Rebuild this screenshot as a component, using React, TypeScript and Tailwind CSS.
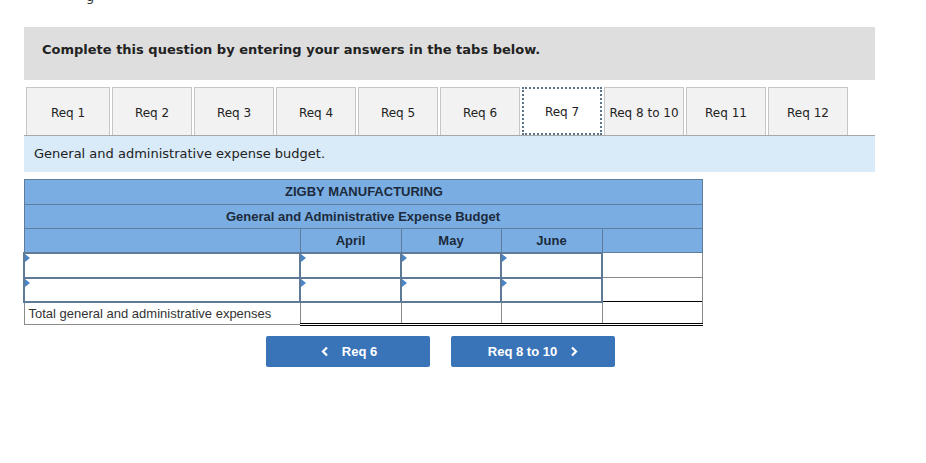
import React from "react";

const verdana = { fontFamily: '"DejaVu Sans", Verdana, sans-serif' };

function Tri() {
  return (
    <span className="absolute left-0 top-0 w-0 h-0 border-t-[4px] border-b-[4px] border-l-[5px] border-t-transparent border-b-transparent border-l-[#4a86c5]" />
  );
}

function InputCell() {
  return (
    <td className="relative border-2 border-[#5e7a96] bg-white p-0">
      <Tri />
    </td>
  );
}

export default function App() {
  const tabs = ["Req 1", "Req 2", "Req 3", "Req 4", "Req 5", "Req 6", "Req 7", "Req 8 to 10", "Req 11", "Req 12"];
  return (
    <div className="bg-white w-[926px] h-[463px] overflow-hidden relative" style={verdana}>
      <div className="h-[5px] overflow-hidden relative">
        <span className="absolute left-[86px] top-[-13px] text-[13px] text-[#333]">g</span>
      </div>
      <div className="ml-[24px] w-[851px] mt-[22px]">
        <div className="h-[53px] bg-[#dedede] flex items-center pl-[18px] pb-[8px]">
          <span className="text-[13px] font-bold text-[#222]">Complete this question by entering your answers in the tabs below.</span>
        </div>
        <div className="mt-[7px] flex pl-[2px] gap-[2px] border-b border-[#a8a8a8]">
          {tabs.map((t, i) => (
            <div
              key={t}
              className={
                "h-[48px] flex items-center justify-center pt-[2px] text-[12px] text-[#222] " +
                (i === 0 ? "w-[84px] " : "w-[80px] ") +
                (i === 6
                  ? "bg-white border-2 border-dotted border-[#5a7388] mb-[-1px]"
                  : "bg-[#f2f2f2] border border-[#c6c6c6] border-b-0")
              }
            >
              {t}
            </div>
          ))}
        </div>
        <div className="h-[36px] bg-[#d9eaf8] flex items-center pl-[10px] text-[13px] text-[#222]">
          General and administrative expense budget.
        </div>
        <table
          className="mt-[7px] ml-[-1px] border-collapse table-fixed w-[678px] text-[13px]"
          style={{ fontFamily: '"Liberation Sans", Arial, sans-serif' }}
        >
          <colgroup>
            <col className="w-[276px]" />
            <col className="w-[101px]" />
            <col className="w-[100px]" />
            <col className="w-[101px]" />
            <col className="w-[100px]" />
          </colgroup>
          <tbody>
            <tr className="h-[25px] bg-[#7aaee3]">
              <td colSpan={5} className="border border-[#5e7d9c] text-center font-bold text-[#1c2a3c] pl-[2px]">
                ZIGBY MANUFACTURING
              </td>
            </tr>
            <tr className="h-[24px] bg-[#7aaee3]">
              <td colSpan={5} className="border border-[#5e7d9c] text-center font-bold text-[#1c2a3c]">
                General and Administrative Expense Budget
              </td>
            </tr>
            <tr className="h-[24px] bg-[#7aaee3] font-bold text-[#1c2a3c]">
              <td className="border border-[#5e7d9c]"></td>
              <td className="border border-[#5e7d9c] text-center">April</td>
              <td className="border border-[#5e7d9c] text-center">May</td>
              <td className="border border-[#5e7d9c] text-center">June</td>
              <td className="border border-[#5e7d9c]"></td>
            </tr>
            <tr className="h-[25px]">
              <InputCell />
              <InputCell />
              <InputCell />
              <InputCell />
              <td className="border border-[#8a8a8a]"></td>
            </tr>
            <tr className="h-[24px]">
              <InputCell />
              <InputCell />
              <InputCell />
              <InputCell />
              <td className="border border-[#8a8a8a]"></td>
            </tr>
            <tr className="h-[23px] text-[#333]">
              <td className="border border-[#8a8a8a] pl-[4px] whitespace-nowrap">Total general and administrative expenses</td>
              <td className="border-x border-x-[#8a8a8a] border-t border-t-black border-b-[3px] border-b-black border-double"></td>
              <td className="border-x border-x-[#8a8a8a] border-t border-t-black border-b-[3px] border-b-black border-double"></td>
              <td className="border-x border-x-[#8a8a8a] border-t border-t-black border-b-[3px] border-b-black border-double"></td>
              <td className="border-x border-x-[#8a8a8a] border-t border-t-black border-b-[3px] border-b-black border-double"></td>
            </tr>
          </tbody>
        </table>
        <div
          className="mt-[10px] flex gap-[21px] pl-[242px] text-[13px] font-bold text-white"
          style={{ fontFamily: '"Liberation Sans", Arial, sans-serif' }}
        >
          <div className="w-[164px] h-[31px] rounded-[2px] bg-[#3a74b8] flex items-center justify-center gap-[13px] pl-[2px]">
            <svg width="8" height="11" viewBox="0 0 8 11"><path d="M6 1.5 L2 5.5 L6 9.5" stroke="white" strokeWidth="2.2" fill="none" /></svg>
            <span>Req 6</span>
          </div>
          <div className="w-[164px] h-[31px] rounded-[2px] bg-[#3a74b8] flex items-center justify-center gap-[13px]">
            <span>Req 8 to 10</span>
            <svg width="8" height="11" viewBox="0 0 8 11"><path d="M2 1.5 L6 5.5 L2 9.5" stroke="white" strokeWidth="2.2" fill="none" /></svg>
          </div>
        </div>
      </div>
    </div>
  );
}
